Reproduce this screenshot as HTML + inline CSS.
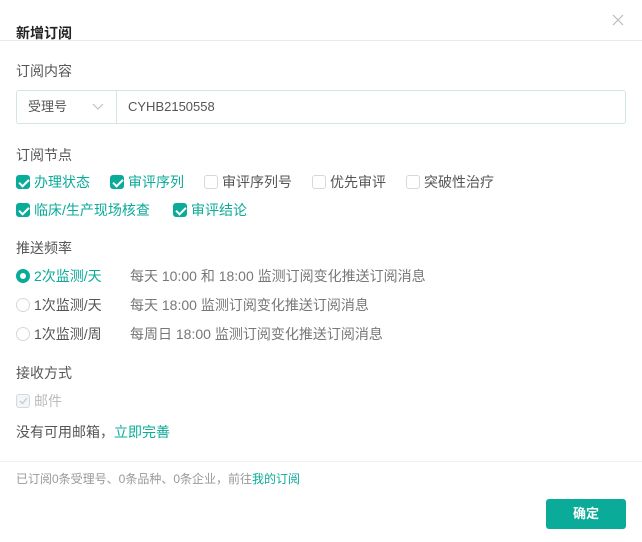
<!DOCTYPE html>
<html><head><meta charset="utf-8"><style>
*{margin:0;padding:0;box-sizing:border-box}
body{width:642px;height:542px;background:#fff;font-family:"Liberation Sans","Noto Sans CJK SC",sans-serif;color:#555;position:relative;overflow:hidden;font-size:14px}
.a{position:absolute;white-space:nowrap;line-height:16px}
.t{color:#0aab99}
.cb{position:absolute;width:14px;height:14px;border-radius:3px;border:1px solid #d5d8de;background:#fff}
.cb.on{background:#0aab99;border-color:#0aab99}
.cb.on::after{content:"";position:absolute;left:4px;top:1px;width:4px;height:8px;border:solid #fff;border-width:0 2px 2px 0;transform:rotate(45deg)}
.rd{position:absolute;width:14px;height:14px;border-radius:50%;border:1px solid #d5d8de;background:#fff}
.rd.on{border:4px solid #0aab99}
</style></head><body>
<div class="a" style="left:16px;top:25px;font-weight:bold;color:#222;font-size:14px">新增订阅</div>
<svg style="position:absolute;left:612px;top:14px" width="12" height="12"><path d="M1 1L11 11M11 1L1 11" stroke="#bbb" stroke-width="1.2"/></svg>
<div style="position:absolute;left:0;top:40px;width:642px;height:1px;background:#e8eaed"></div>
<div class="a" style="left:16px;top:63px">订阅内容</div>
<div style="position:absolute;left:16px;top:90px;width:610px;height:34px;border:1px solid #d3e6e3;border-radius:3px"></div>
<div style="position:absolute;left:116px;top:90px;width:1px;height:34px;background:#d3e6e3"></div>
<div class="a" style="left:28px;top:99px;font-size:13px">受理号</div>
<svg style="position:absolute;left:92px;top:103px" width="12" height="8"><path d="M1 1L6 6L11 1" stroke="#bbb" fill="none"/></svg>
<div class="a" style="left:128px;top:99px;font-size:13px">CYHB2150558</div>
<div class="a" style="left:16px;top:147px">订阅节点</div>
<div class="cb on" style="left:16px;top:175px"></div><div class="a t" style="left:34px;top:174px">办理状态</div>
<div class="cb on" style="left:110px;top:175px"></div><div class="a t" style="left:128px;top:174px">审评序列</div>
<div class="cb" style="left:204px;top:175px"></div><div class="a" style="left:222px;top:174px">审评序列号</div>
<div class="cb" style="left:312px;top:175px"></div><div class="a" style="left:330px;top:174px">优先审评</div>
<div class="cb" style="left:406px;top:175px"></div><div class="a" style="left:424px;top:174px">突破性治疗</div>
<div class="cb on" style="left:16px;top:203px"></div><div class="a t" style="left:34px;top:202px">临床/生产现场核查</div>
<div class="cb on" style="left:173px;top:203px"></div><div class="a t" style="left:191px;top:202px">审评结论</div>
<div class="a" style="left:16px;top:240px">推送频率</div>
<div class="rd on" style="left:16px;top:269px"></div><div class="a t" style="left:34px;top:268px">2次监测/天</div><div class="a" style="left:130px;top:268px;color:#777">每天 10:00 和 18:00 监测订阅变化推送订阅消息</div>
<div class="rd" style="left:16px;top:298px"></div><div class="a" style="left:34px;top:297px">1次监测/天</div><div class="a" style="left:130px;top:297px;color:#777">每天 18:00 监测订阅变化推送订阅消息</div>
<div class="rd" style="left:16px;top:327px"></div><div class="a" style="left:34px;top:326px">1次监测/周</div><div class="a" style="left:130px;top:326px;color:#777">每周日 18:00 监测订阅变化推送订阅消息</div>
<div class="a" style="left:16px;top:365px">接收方式</div>
<div class="cb" style="left:16px;top:394px;background:#f3f5f7"></div>
<svg style="position:absolute;left:19px;top:397px" width="9" height="8"><path d="M1 4L3.5 6.5L8 1" stroke="#c5cad0" fill="none" stroke-width="1.3"/></svg>
<div class="a" style="left:34px;top:393px;color:#bbb">邮件</div>
<div class="a" style="left:16px;top:424px">没有可用邮箱，<span class="t">立即完善</span></div>
<div style="position:absolute;left:0;top:461px;width:642px;height:1px;background:#eef0f2"></div>
<div class="a" style="left:16px;top:471px;font-size:12px;color:#999">已订阅0条受理号、0条品种、0条企业，前往<span class="t">我的订阅</span></div>
<div style="position:absolute;left:546px;top:499px;width:80px;height:30px;background:#0aab99;border-radius:3px;color:#fff;font-size:13px;font-weight:bold;text-align:center;line-height:30px">确定</div>
</body></html>
